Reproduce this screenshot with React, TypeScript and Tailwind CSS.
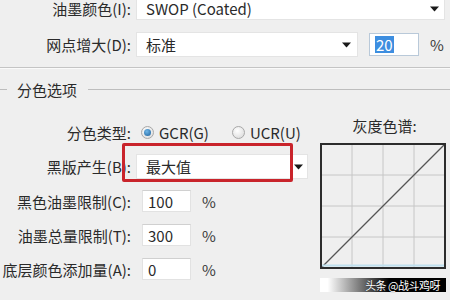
import React from "react";

// Photoshop-style "自定 CMYK" dialog fragment
function Arrow() {
  return (
    <svg width="9" height="6" viewBox="0 0 9 6" className="shrink-0">
      <path d="M0 0.5 L9 0.5 L4.5 5.5 Z" fill="#1a1a1a" />
    </svg>
  );
}

function Select({ value, width, height, pad = "pr-[6px]" }: { value: string; width: string; height: string; pad?: string }) {
  return (
    <div className={`flex items-center justify-between bg-white ${width} ${height} pl-[9px] ${pad} border border-[#e4e4e4]`}>
      <span className="text-[15px] text-[#2a2a2a]">{value}</span>
      <Arrow />
    </div>
  );
}

function Label({ text }: { text: string }) {
  return <div className="w-[131px] shrink-0 text-right text-[15px] text-[#2a2a2a] whitespace-nowrap">{text}</div>;
}

function NumRow({ label, value }: { label: string; value: string }) {
  return (
    <div className="flex items-center h-[34px]">
      <Label text={label} />
      <div className="ml-[11px] w-[49px] h-[22px] bg-white border border-[#e2e2e2] border-t-[#d0d0d0] flex items-center pl-[5px] text-[15px] text-[#2a2a2a]">
        {value}
      </div>
      <span className="ml-[11px] text-[15px] text-[#3a3a3a]">%</span>
    </div>
  );
}

function Radio({ checked, label }: { checked?: boolean; label: string }) {
  return (
    <div className="flex items-center gap-[5px]">
      <span className="w-[13px] h-[13px] rounded-full border border-[#a8a8a8] bg-[radial-gradient(circle_at_40%_35%,#ffffff,#d6d6d6)] flex items-center justify-center">
        {checked && <span className="w-[7px] h-[7px] rounded-full bg-[radial-gradient(circle_at_40%_35%,#6fb6e8,#1c5f9a)]" />}
      </span>
      <span className="text-[15px] text-[#2a2a2a]">{label}</span>
    </div>
  );
}

function GrayRamp() {
  return (
    <svg width="126" height="126" viewBox="0 0 126 126">
      <rect x="0" y="0" width="126" height="126" fill="#efefef" />
      {[32, 63, 94].map((p) => (
        <g key={p}>
          <line x1={p} y1="0" x2={p} y2="126" stroke="#c6c6c6" strokeWidth="1" />
          <line x1="0" y1={p} x2="126" y2={p} stroke="#c6c6c6" strokeWidth="1" />
        </g>
      ))}
      <line x1="1" y1="125" x2="125" y2="1" stroke="#555" strokeWidth="1.3" />
      <line x1="1" y1="122.5" x2="125" y2="122.5" stroke="#bfe0ee" strokeWidth="2" />
      <rect x="1" y="1" width="124" height="124" fill="none" stroke="#2c2c2c" strokeWidth="2" />
    </svg>
  );
}

export default function App() {
  return (
    <div className="w-[450px] h-[300px] overflow-hidden bg-[#efefef] font-['Noto_Sans_CJK_SC',sans-serif] leading-none">
      <div className="flex items-start h-[20px]">
        <div className="pt-[1px]">
          <Label text="油墨颜色(I):" />
        </div>
        <div className="ml-[5px] -mt-[3px]">
          <Select value="SWOP (Coated)" width="w-[309px]" height="h-[23px]" pad="pr-[5px]" />
        </div>
      </div>

      <div className="mt-[12px] flex items-center h-[25px]">
        <Label text="网点增大(D):" />
        <div className="ml-[5px]">
          <Select value="标准" width="w-[222px]" height="h-[25px]" pad="pr-[6px]" />
        </div>
        <div className="ml-[11px] w-[50px] h-[23px] bg-white border border-[#b9c9d9] flex items-center pl-[5px]">
          <span className="bg-[#3d8ee0] text-white text-[15px] px-[1px] py-[1px]">20</span>
        </div>
        <span className="ml-[11px] text-[15px] text-[#3a3a3a]">%</span>
      </div>

      <div className="mt-[10px] h-[2px] border-t border-[#c4c4c4] border-b border-b-[#fafafa]" />

      <div className="mt-[11px] flex items-center h-[18px]">
        <div className="w-[7px] h-px bg-[#bdbdbd]" />
        <span className="ml-[10px] text-[15px] text-[#2a2a2a]">分色选项</span>
        <div className="ml-[11px] flex-1 h-px bg-[#bdbdbd]" />
      </div>

      <div className="mt-[7px] flex">
        <div className="w-[320px] shrink-0 pt-[10px]">
          <div className="flex items-center h-[34px]">
            <Label text="分色类型:" />
            <div className="ml-[10px] flex items-center gap-[23px]">
              <Radio checked label="GCR(G)" />
              <Radio label="UCR(U)" />
            </div>
          </div>

          <div className="relative flex items-center h-[35px]">
            <Label text="黑版产生(B):" />
            <div className="ml-[5px]">
              <Select value="最大值" width="w-[172px]" height="h-[25px]" pad="pr-[4px]" />
            </div>
            <div className="absolute left-[122px] top-[-6px] w-[171px] h-[39px] border-[3px] border-[#c9242b] rounded-[2px]" />
          </div>

          <NumRow label="黑色油墨限制(C):" value="100" />
          <NumRow label="油墨总量限制(T):" value="300" />
          <NumRow label="底层颜色添加量(A):" value="0" />
        </div>

        <div className="w-[126px] flex flex-col items-center pt-[11px]">
          <div className="text-[15px] text-[#2a2a2a] pl-[3px] h-[18px] flex items-center">灰度色谱:</div>
          <div className="mt-[9px]">
            <GrayRamp />
          </div>
          <div className="mt-[9px] w-[126px] h-[14px] bg-[linear-gradient(to_right,#ffffff_6%,#000000_55%)] flex items-center justify-end pr-[6px]">
            <span className="text-[11px] tracking-[-0.5px] text-white [text-shadow:0_0_1px_#000]">头条 @战斗鸡呀</span>
          </div>
        </div>
      </div>
    </div>
  );
}
